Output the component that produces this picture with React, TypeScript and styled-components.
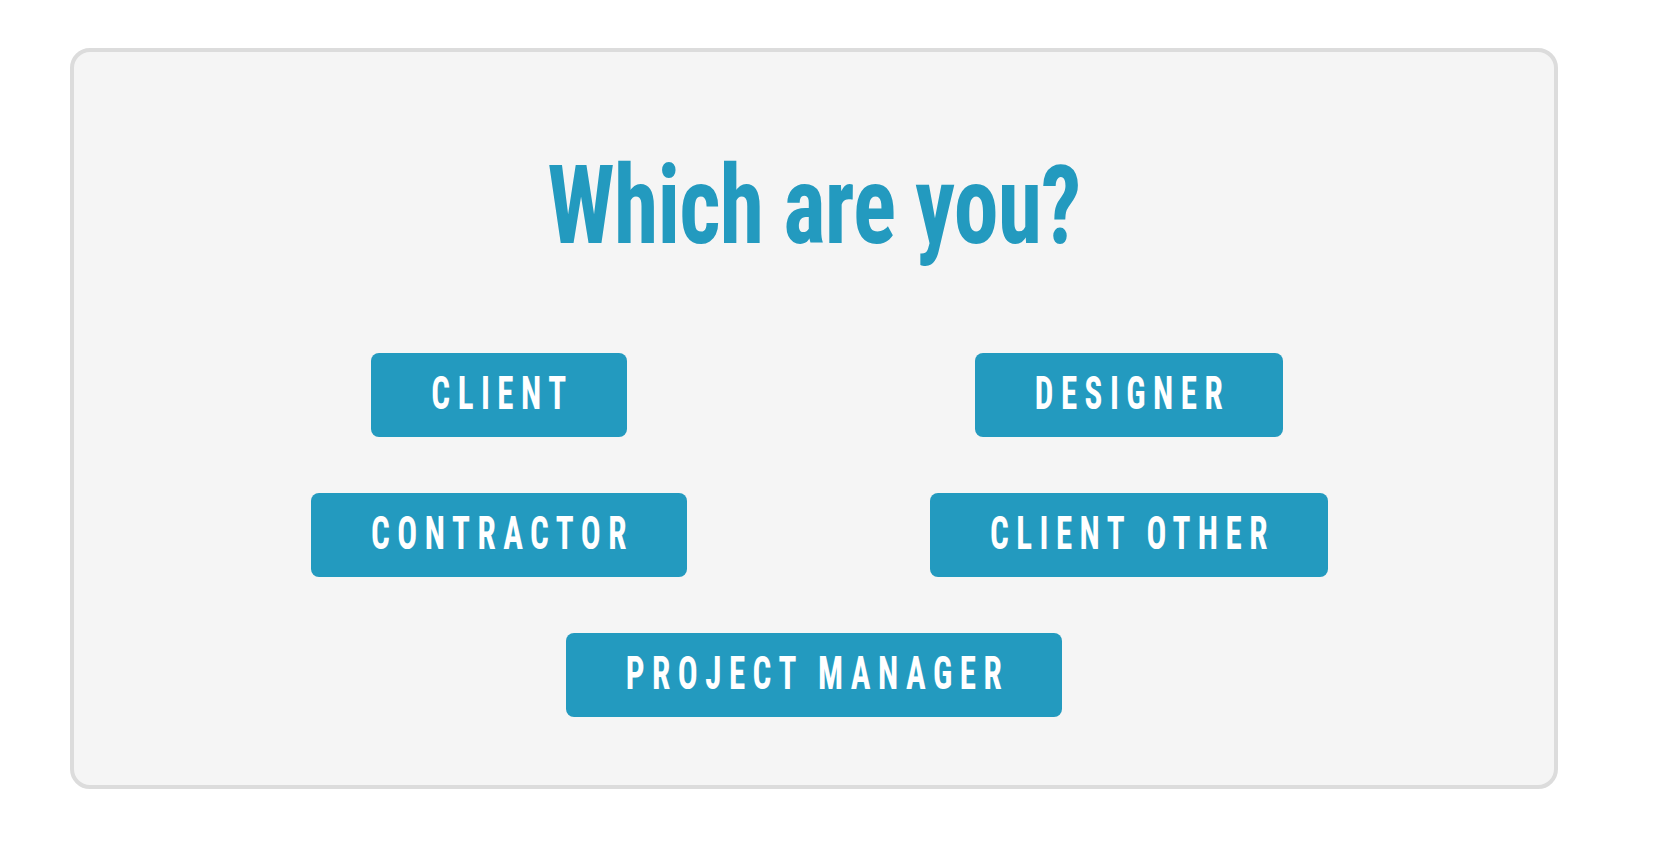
import React from "react";
import styled, { createGlobalStyle } from "styled-components";

const GlobalStyle = createGlobalStyle`
  html, body { margin: 0; padding: 0; background: #ffffff; }
  body { font-family: "Roboto Condensed", "Roboto", sans-serif; }
  * { box-sizing: border-box; }
`;

const Page = styled.div`
  padding: 48px 0 0 70px;
`;

const Card = styled.section`
  width: 1488px;
  background: #f5f5f5;
  border: 4px solid #dcdcdc;
  border-radius: 20px;
  padding: 99px 0 68px;
  display: flex;
  flex-direction: column;
  align-items: center;
`;

const Title = styled.h1`
  margin: 0 0 92px;
  font-family: "Roboto Condensed", "Roboto", sans-serif;
  font-weight: 700;
  font-size: 110px;
  line-height: 110px;
  color: #239abf;
  display: flex;
  justify-content: center;
`;

const TitleText = styled.span`
  display: inline-block;
  transform: scaleX(0.818);
  letter-spacing: -1px;
  white-space: nowrap;
`;

const Choices = styled.div`
  display: grid;
  grid-template-columns: 630px 630px;
  row-gap: 56px;
  justify-items: center;
`;

const Choice = styled.button<{ $wide?: boolean }>`
  grid-column: ${(p) => (p.$wide ? "1 / span 2" : "auto")};
  height: 84px;
  padding: 18px 53px 22px 60px;
  border: none;
  border-radius: 8px;
  background: #239abf;
  color: #ffffff;
  font-family: "Roboto Condensed", "Roboto", sans-serif;
  font-weight: 700;
  font-size: 33px;
  line-height: 44px;
  letter-spacing: 7.5px;
  text-transform: uppercase;
  white-space: nowrap;
  cursor: pointer;
`;

const ChoiceLabel = styled.span`
  display: inline-block;
  transform: scaleY(1.42);
  transform-origin: center;
`;

const roles = ["Client", "Designer", "Contractor", "Client Other"];

export default function App() {
  return (
    <>
      <GlobalStyle />
      <Page>
        <Card>
          <Title>
            <TitleText>Which are you?</TitleText>
          </Title>
          <Choices>
            {roles.map((r) => (
              <Choice key={r}>
                <ChoiceLabel>{r}</ChoiceLabel>
              </Choice>
            ))}
            <Choice $wide>
              <ChoiceLabel>Project Manager</ChoiceLabel>
            </Choice>
          </Choices>
        </Card>
      </Page>
    </>
  );
}
